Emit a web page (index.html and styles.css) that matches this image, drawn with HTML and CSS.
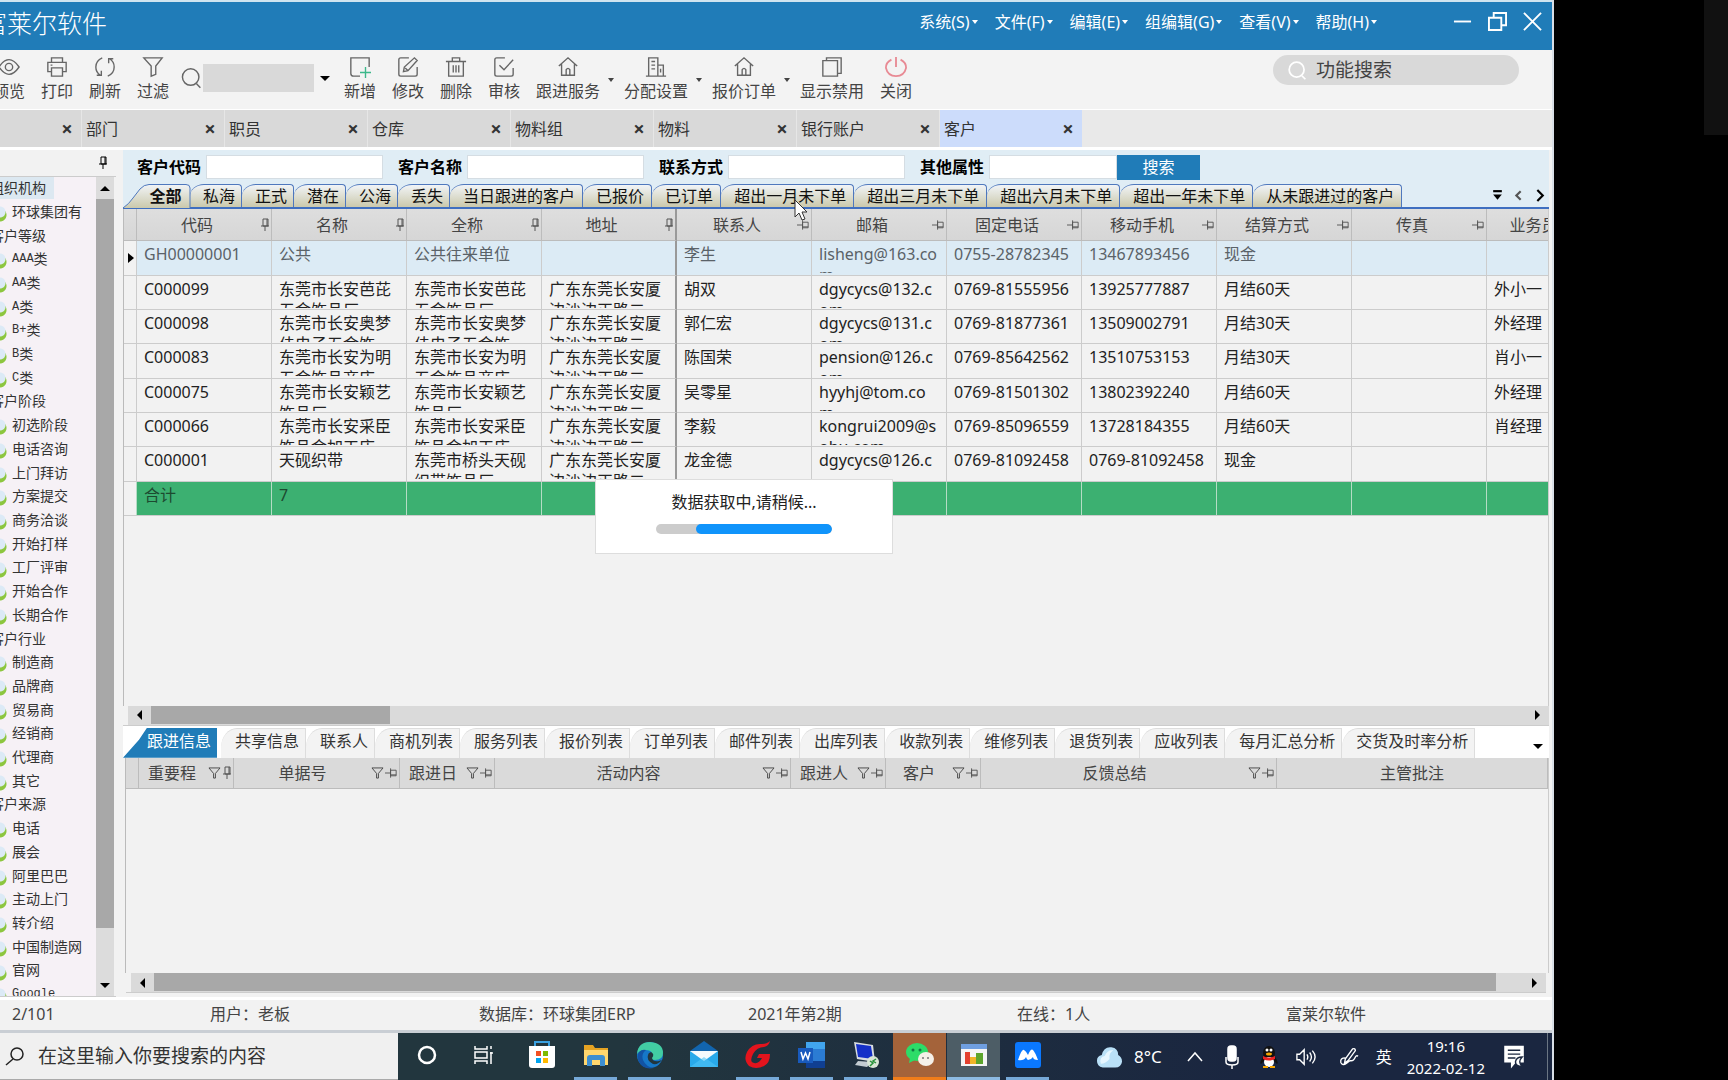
FILE: index.html
```html
<!DOCTYPE html>
<html lang="zh-CN">
<head>
<meta charset="utf-8">
<title>富莱尔软件</title>
<link rel="stylesheet" href="styles.css">
</head>
<body>
<svg class="defs" aria-hidden="true">
  <symbol id="pin" viewBox="0 0 10 14"><path d="M3 1h5v7H3zM1 8h8M5 8v5M7 1v7" /></symbol>
  <symbol id="pin-side" viewBox="0 0 14 10"><path d="M6 2h6v6H6zM6 0v10M0 5h6M6 7h6" /></symbol>
  <symbol id="funnel" viewBox="0 0 14 13"><path d="M1 1h12L8 7v5H6V7z" /></symbol>
  <symbol id="home" viewBox="0 0 24 24"><path d="M2 11 12 2l10 9M5 9v12h14V9M10 21v-6q2-3 4 0v6" /></symbol>
  <symbol id="lens" viewBox="0 0 24 24"><circle cx="11" cy="11" r="8.500"/><path d="m17 18 4 4" /></symbol>
</svg>
<div class="screen">
<div class="desktop">
  <header class="titlebar">
    <h1 class="brand">富莱尔软件</h1>
    <nav class="menu">
      <button>系统(S)<i class="caret"></i></button>
      <button>文件(F)<i class="caret"></i></button>
      <button>编辑(E)<i class="caret"></i></button>
      <button>组编辑(G)<i class="caret"></i></button>
      <button>查看(V)<i class="caret"></i></button>
      <button>帮助(H)<i class="caret"></i></button>
    </nav>
    <div class="winctl">
      <button aria-label="最小化"><svg viewBox="0 0 20 20"><path d="M1 10h18"/></svg></button>
      <button aria-label="还原"><svg viewBox="0 0 20 20"><path d="M1 6h13v13H1zM6 6V1h13v13h-5"/></svg></button>
      <button aria-label="关闭窗口"><svg viewBox="0 0 20 20"><path d="m1 1 18 18M19 1 1 19"/></svg></button>
    </div>
  </header>

  <div class="toolbar">
    <button class="tool"><svg viewBox="0 0 24 24"><path d="M1 12q11-16 22 0-11 16-22 0z"/><circle cx="12" cy="12" r="4"/></svg>预览</button>
    <button class="tool"><svg viewBox="0 0 24 24"><path d="M6 7V2h12v5M6 17H2V7h20v10h-4M6 13h12v9H6zM5 10h2"/></svg>打印</button>
    <button class="tool"><svg viewBox="0 0 24 24"><path d="M9 2Q2 5 2 12q0 6 5 9M3 21h5v-5M15 22q7-3 7-10 0-6-5-9M21 3h-5v5"/></svg>刷新</button>
    <button class="tool"><svg viewBox="0 0 24 24"><path d="M2 2h20l-7 9v9l-5 2V11z"/></svg>过滤</button>
    <label class="lookup"><svg viewBox="0 0 24 24"><use href="#lens"/></svg>
      <select aria-label="查找字段"><option></option></select><i class="caret big"></i></label>
    <button class="tool"><svg viewBox="0 0 24 24"><path d="M12 22H5q-3 0-3-3V2h20v10"/><path class="green" d="M18 12v12M12 18h12"/></svg>新增</button>
    <button class="tool"><svg viewBox="0 0 24 24"><path d="M13 2H4Q2 2 2 4v16q0 2 2 2h16q2 0 2-2v-8M7 17l1-5L19 2l3 3-10 11zM9 13l3 3"/></svg>修改</button>
    <button class="tool"><svg viewBox="0 0 24 24"><path d="M1 6h22M8 6V2h8v4M4 6v16h16V6M9 10v8M12 10v8M15 10v8"/></svg>删除</button>
    <button class="tool"><svg viewBox="0 0 24 24"><path d="M13 2H4Q2 2 2 4v16q0 2 2 2h16q2 0 2-2v-7M7 10l5 5L22 4"/></svg>审核</button>
    <button class="tool wide"><svg viewBox="0 0 24 24"><use href="#home"/></svg>跟进服务</button><button class="drop" aria-label="跟进服务选项"><i class="caret"></i></button>
    <button class="tool wide"><svg viewBox="0 0 24 24"><path d="M1 22h22M4 22V2h10v20M14 10h6v12M7 6h4M7 10h4M7 14h4M17 14v4"/></svg>分配设置</button><button class="drop" aria-label="分配设置选项"><i class="caret"></i></button>
    <button class="tool wide"><svg viewBox="0 0 24 24"><use href="#home"/></svg>报价订单</button><button class="drop" aria-label="报价订单选项"><i class="caret"></i></button>
    <button class="tool wide"><svg viewBox="0 0 24 24"><path d="M2 5h16v17H2zM6 5V2h16v17h-4"/></svg>显示禁用</button>
    <button class="tool"><svg class="red" viewBox="0 0 24 24"><path d="M7 4Q1 7 1 13q2 9 11 9t11-9q0-6-6-9M12 1v11"/></svg>关闭</button>
    <label class="fnsearch"><svg viewBox="0 0 24 24"><use href="#lens"/></svg><input type="text" value="功能搜索" aria-label="功能搜索"></label>
  </div>

  <div class="doctabs">
    <div class="doctab"><span></span><button aria-label="关闭">×</button></div>
    <div class="doctab"><span>部门</span><button aria-label="关闭">×</button></div>
    <div class="doctab"><span>职员</span><button aria-label="关闭">×</button></div>
    <div class="doctab"><span>仓库</span><button aria-label="关闭">×</button></div>
    <div class="doctab"><span>物料组</span><button aria-label="关闭">×</button></div>
    <div class="doctab"><span>物料</span><button aria-label="关闭">×</button></div>
    <div class="doctab"><span>银行账户</span><button aria-label="关闭">×</button></div>
    <div class="doctab active"><span>客户</span><button aria-label="关闭">×</button></div>
  </div>

  <div class="work">
    <aside class="side">
      <div class="sidehead"><button aria-label="固定"><svg class="pin dark"><use href="#pin"/></svg></button></div>
      <div class="sidebody">
        <ul class="tree">
          <li class="root sel"><span>组织机构</span></li>
          <li>环球集团有</li>
          <li class="root">客户等级</li>
          <li><b>AAA</b>类</li>
          <li><b>AA</b>类</li>
          <li><b>A</b>类</li>
          <li><b>B+</b>类</li>
          <li><b>B</b>类</li>
          <li><b>C</b>类</li>
          <li class="root">客户阶段</li>
          <li>初选阶段</li>
          <li>电话咨询</li>
          <li>上门拜访</li>
          <li>方案提交</li>
          <li>商务洽谈</li>
          <li>开始打样</li>
          <li>工厂评审</li>
          <li>开始合作</li>
          <li>长期合作</li>
          <li class="root">客户行业</li>
          <li>制造商</li>
          <li>品牌商</li>
          <li>贸易商</li>
          <li>经销商</li>
          <li>代理商</li>
          <li>其它</li>
          <li class="root">客户来源</li>
          <li>电话</li>
          <li>展会</li>
          <li>阿里巴巴</li>
          <li>主动上门</li>
          <li>转介绍</li>
          <li>中国制造网</li>
          <li>官网</li>
          <li><b>Google</b></li>
        </ul>
        <div class="vscroll">
          <button aria-label="向上"><i class="tri up"></i></button>
          <div class="vtrack"><div class="vthumb"></div></div>
          <button aria-label="向下"><i class="tri down"></i></button>
        </div>
      </div>
    </aside>

    <main class="main">
      <section class="upper">
        <form class="filter">
          <label for="f1">客户代码</label><input id="f1" type="text">
          <label for="f2">客户名称</label><input id="f2" type="text">
          <label for="f3">联系方式</label><input id="f3" type="text">
          <label for="f4">其他属性</label><input id="f4" class="short" type="text">
          <button type="button">搜索</button>
        </form>
        <div class="views">
          <button class="view first"><svg viewBox="0 0 68 24"><defs><linearGradient id="tabfill" x2="0" y2="1"><stop offset="0" stop-color="#f1f4f7"/><stop offset="1" stop-color="#cbc9ac"/></linearGradient></defs><path d="M0 24 Q6 20 10 14 L17 5 Q21 .5 26 .5 H63 Q67 .5 67 4 V24" fill="url(#tabfill)" stroke="#4f78bd"/></svg><span>全部</span></button>
          <button class="view brief">私海</button>
          <button class="view brief">正式</button>
          <button class="view brief">潜在</button>
          <button class="view brief">公海</button>
          <button class="view brief">丢失</button>
          <button class="view">当日跟进的客户</button>
          <button class="view">已报价</button>
          <button class="view">已订单</button>
          <button class="view">超出一月未下单</button>
          <button class="view">超出三月未下单</button>
          <button class="view">超出六月未下单</button>
          <button class="view">超出一年未下单</button>
          <button class="view">从未跟进过的客户</button>
          <div class="viewnav">
            <button aria-label="列表"><svg viewBox="0 0 10 12"><path d="M1 2h8" stroke="#000" stroke-width="2"/><path d="M1 5h8L5 10z" fill="#000"/></svg></button>
            <button aria-label="向前"><svg viewBox="0 0 10 12"><path d="M7 2 3 6l4 4" fill="none" stroke="#555" stroke-width="2"/></svg></button>
            <button aria-label="向后"><svg viewBox="0 0 10 12"><path d="m3 1 5 5-5 5" fill="none" stroke="#000" stroke-width="2"/></svg></button>
          </div>
          <svg class="cursor" viewBox="0 0 14 22"><path d="M1 1v17l4-4 3 7 3-1-3-7h5z" fill="#fff" stroke="#333"/></svg>
        </div>
        <div class="gridwrap">
          <table class="grid">
            <colgroup><col class="c-mark"><col><col><col><col><col><col><col><col><col><col><col class="c-last"></colgroup>
            <thead><tr>
              <th></th>
              <th><div>代码<svg class="pin"><use href="#pin"/></svg></div></th>
              <th><div>名称<svg class="pin"><use href="#pin"/></svg></div></th>
              <th><div>全称<svg class="pin"><use href="#pin"/></svg></div></th>
              <th class="frozen"><div>地址<svg class="pin"><use href="#pin"/></svg></div></th>
              <th><div>联系人<svg class="pin side-pin"><use href="#pin-side"/></svg></div></th>
              <th><div>邮箱<svg class="pin side-pin"><use href="#pin-side"/></svg></div></th>
              <th><div>固定电话<svg class="pin side-pin"><use href="#pin-side"/></svg></div></th>
              <th><div>移动手机<svg class="pin side-pin"><use href="#pin-side"/></svg></div></th>
              <th><div>结算方式<svg class="pin side-pin"><use href="#pin-side"/></svg></div></th>
              <th><div>传真<svg class="pin side-pin"><use href="#pin-side"/></svg></div></th>
              <th><div>业务员</div></th>
            </tr></thead>
            <tbody>
              <tr class="current"><td class="mark"><i class="tri right"></i></td><td><div>GH00000001</div></td><td><div>公共</div></td><td><div>公共往来单位</div></td><td class="frozen"></td><td><div>李生</div></td><td><div>lisheng@163.co<br>m</div></td><td><div>0755-28782345</div></td><td><div>13467893456</div></td><td><div>现金</div></td><td></td><td></td></tr>
              <tr><td class="mark"></td><td><div>C000099</div></td><td><div>东莞市长安芭芘五金饰品厂</div></td><td><div>东莞市长安芭芘五金饰品厂</div></td><td class="frozen"><div>广东东莞长安厦边沙边正路二</div></td><td><div>胡双</div></td><td><div>dgycycs@132.c<br>om</div></td><td><div>0769-81555956</div></td><td><div>13925777887</div></td><td><div>月结60天</div></td><td></td><td><div>外小一</div></td></tr>
              <tr><td class="mark"></td><td><div>C000098</div></td><td><div>东莞市长安奥梦佳电子五金饰</div></td><td><div>东莞市长安奥梦佳电子五金饰</div></td><td class="frozen"><div>广东东莞长安厦边沙边正路二</div></td><td><div>郭仁宏</div></td><td><div>dgycycs@131.c<br>om</div></td><td><div>0769-81877361</div></td><td><div>13509002791</div></td><td><div>月结30天</div></td><td></td><td><div>外经理</div></td></tr>
              <tr><td class="mark"></td><td><div>C000083</div></td><td><div>东莞市长安为明五金饰品商店</div></td><td><div>东莞市长安为明五金饰品商店</div></td><td class="frozen"><div>广东东莞长安厦边沙边正路二</div></td><td><div>陈国荣</div></td><td><div>pension@126.c<br>om</div></td><td><div>0769-85642562</div></td><td><div>13510753153</div></td><td><div>月结30天</div></td><td></td><td><div>肖小一</div></td></tr>
              <tr><td class="mark"></td><td><div>C000075</div></td><td><div>东莞市长安颖艺饰品厂</div></td><td><div>东莞市长安颖艺饰品厂</div></td><td class="frozen"><div>广东东莞长安厦边沙边正路二</div></td><td><div>吴零星</div></td><td><div>hyyhj@tom.co<br>m</div></td><td><div>0769-81501302</div></td><td><div>13802392240</div></td><td><div>月结60天</div></td><td></td><td><div>外经理</div></td></tr>
              <tr><td class="mark"></td><td><div>C000066</div></td><td><div>东莞市长安采臣饰品金加工店</div></td><td><div>东莞市长安采臣饰品金加工店</div></td><td class="frozen"><div>广东东莞长安厦边沙边正路二</div></td><td><div>李毅</div></td><td><div>kongrui2009@s<br>ohu.com</div></td><td><div>0769-85096559</div></td><td><div>13728184355</div></td><td><div>月结60天</div></td><td></td><td><div>肖经理</div></td></tr>
              <tr><td class="mark"></td><td><div>C000001</div></td><td><div>天砚织带</div></td><td><div>东莞市桥头天砚织带饰品厂</div></td><td class="frozen"><div>广东东莞长安厦边沙边正路二</div></td><td><div>龙金德</div></td><td><div>dgycycs@126.c</div></td><td><div>0769-81092458</div></td><td><div>0769-81092458</div></td><td><div>现金</div></td><td></td><td></td></tr>
              <tr class="total"><td class="mark"></td><td><div>合计</div></td><td><div>7</div></td><td></td><td></td><td></td><td></td><td></td><td></td><td></td><td></td><td></td></tr>
            </tbody>
          </table>
          <div class="loading" role="status">
            <p>数据获取中,请稍候...</p>
            <div class="bar"><div class="fill"></div></div>
          </div>
        </div>
        <div class="hscroll">
          <button aria-label="向左"><i class="tri left"></i></button>
          <div class="htrack"><div class="hthumb" style="width:17.4%"></div></div>
          <button aria-label="向右"><i class="tri right"></i></button>
        </div>
      </section>

      <section class="lower">
        <div class="subtabs">
          <button class="active">跟进信息</button>
          <button>共享信息</button>
          <button>联系人</button>
          <button>商机列表</button>
          <button>服务列表</button>
          <button>报价列表</button>
          <button>订单列表</button>
          <button>邮件列表</button>
          <button>出库列表</button>
          <button>收款列表</button>
          <button>维修列表</button>
          <button>退货列表</button>
          <button>应收列表</button>
          <button>每月汇总分析</button>
          <button>交货及时率分析</button>
          <button class="more" aria-label="更多"><i class="tri down"></i></button>
        </div>
        <div class="detailwrap">
          <table class="detail">
            <colgroup><col class="d-mark"><col class="d-s"><col class="d-m"><col class="d-s"><col class="d-l"><col class="d-s"><col class="d-s"><col class="d-l"><col></colgroup>
            <thead><tr>
              <th></th>
              <th><div>重要程<span><svg class="funnel"><use href="#funnel"/></svg><svg class="pin"><use href="#pin"/></svg></span></div></th>
              <th><div>单据号<span><svg class="funnel"><use href="#funnel"/></svg><svg class="pin side-pin"><use href="#pin-side"/></svg></span></div></th>
              <th><div>跟进日<span><svg class="funnel"><use href="#funnel"/></svg><svg class="pin side-pin"><use href="#pin-side"/></svg></span></div></th>
              <th><div>活动内容<span><svg class="funnel"><use href="#funnel"/></svg><svg class="pin side-pin"><use href="#pin-side"/></svg></span></div></th>
              <th><div>跟进人<span><svg class="funnel"><use href="#funnel"/></svg><svg class="pin side-pin"><use href="#pin-side"/></svg></span></div></th>
              <th><div>客户<span><svg class="funnel"><use href="#funnel"/></svg><svg class="pin side-pin"><use href="#pin-side"/></svg></span></div></th>
              <th><div>反馈总结<span><svg class="funnel"><use href="#funnel"/></svg><svg class="pin side-pin"><use href="#pin-side"/></svg></span></div></th>
              <th class="plain"><div>主管批注</div></th>
            </tr></thead>
          </table>
        </div>
        <div class="hscroll low">
          <button aria-label="向左"><i class="tri left"></i></button>
          <div class="htrack"><div class="hthumb" style="width:98%"></div></div>
          <button aria-label="向右"><i class="tri right"></i></button>
        </div>
      </section>
    </main>
  </div>

  <footer class="status">
    <span>2/101</span><span>用户：老板</span><span>数据库：环球集团ERP</span><span>2021年第2期</span><span>在线：1人</span><span>富莱尔软件</span>
  </footer>

  <div class="taskbar">
    <label class="winsearch"><svg viewBox="0 0 20 20"><circle cx="12" cy="8" r="6"/><path d="m8 13-7 6"/></svg><input type="text" value="在这里输入你要搜索的内容" aria-label="搜索"></label>
    <div class="apps">
      <button aria-label="Cortana"><svg viewBox="0 0 28 28"><circle cx="14" cy="14" r="8" fill="none" stroke="#fff" stroke-width="2.500"/></svg></button>
      <button class="taskview" aria-label="任务视图"><svg viewBox="0 0 28 28"><path d="M5 5v3h12V5M5 23v-3h12v3M5 11h12v6H5zM21 5v3M21 11v12M20 12h3" fill="none" stroke="#fff" stroke-width="1.500"/></svg></button>
      <button aria-label="Store"><svg viewBox="0 0 28 28"><path d="M7 6V1h14v5" fill="none" stroke="#3aa0e0" stroke-width="2"/><path d="M1 5h26v19q0 3-3 3H4q-3 0-3-3z" fill="#fff"/><path d="M8 10h5v5H8z" fill="#f25022"/><path d="M15 10h5v5h-5z" fill="#7fba00"/><path d="M8 17h5v5H8z" fill="#00a4ef"/><path d="M15 17h5v5h-5z" fill="#ffb900"/></svg></button>
      <button class="run" aria-label="文件资源管理器"><svg viewBox="0 0 28 28"><path d="M2 4h9l2 3h13v5H2z" fill="#e5a323"/><path d="M2 9h24v15H2z" fill="#ffd76e"/><path d="M5 25v-8q0-3 3-3h12q3 0 3 3v8h-5v-6h-8v6z" fill="#3d8fd1"/></svg></button>
      <button class="run" aria-label="Edge"><svg viewBox="0 0 28 28"><circle cx="14" cy="14" r="13" fill="#1677c8"/><path d="M1 13Q2 1 14 1q13 1 13 11 0 7-8 7-5 0-3-4 1-6-6-6-6 0-9 4z" fill="#42cda3"/><path d="M10 9q-5 4-3 10 3 7 11 8-11 2-15-6Q0 15 3 11q3-3 7-2z" fill="#1253a4"/><path d="M15 11q4 2 1 6 1 4 7 3l3-1q-4 5-9 4-7-4-5-9 0-2 3-3z" fill="#22363e"/></svg></button>
      <button aria-label="邮件"><svg viewBox="0 0 28 28"><path d="M0 10 14 0l14 10v4H0z" fill="#1265ae"/><path d="M0 10h28v16H0z" fill="#29a9ea"/><path d="M0 10h28L14 20z" fill="#f5fafd"/><path d="m0 26 14-10 14 10z" fill="#50c4f5" opacity=".6"/></svg></button>
      <button class="run" aria-label="G"><svg viewBox="0 0 28 28"><path d="M26 0q-1 5-6 6-7 0-11 7-4 8 1 9 5 1 8-5h-5l2-4h11q0 9-6 12-8 4-15 0-6-6-2-14Q8 2 18 3q5 0 8-3z" fill="#e3141d"/></svg></button>
      <button class="run" aria-label="Word"><svg viewBox="0 0 28 28"><path d="M8 1h19v26H8z" fill="#2b7cd3"/><path d="M8 1h19v7H8z" fill="#41a5ee"/><path d="M8 20h19v7H8z" fill="#103f91"/><path d="M0 7h15v15H0z" fill="#185abd"/><path d="m3 11 2 7 2.500-6L10 18l2-7" fill="none" stroke="#fff" stroke-width="1.500"/></svg></button>
      <button class="run" aria-label="远程"><svg viewBox="0 0 28 28"><path d="m2 1 19 3 2 17L5 18z" fill="#d8dde2"/><path d="m4 3 15 2 2 13L6 16z" fill="#1430c8"/><path d="m6 20 14 1-5 5-12-2z" fill="#c4ccd2"/><circle cx="21" cy="21" r="6" fill="#d9e6d6"/><path d="m18 20 3 2-3 3M24 18l-3 2 3 2" fill="none" stroke="#27913a" stroke-width="1.500"/></svg></button>
      <button class="run chat" aria-label="微信"><svg viewBox="0 0 28 28"><ellipse cx="11" cy="11" rx="11" ry="9" fill="#2ddc68"/><path d="m4 17-1 5 6-3z" fill="#2ddc68"/><ellipse cx="20" cy="18" rx="8" ry="7" fill="#f5f0e8"/><circle cx="7" cy="9" r="1.500" fill="#174"/><circle cx="14" cy="9" r="1.500" fill="#174"/><circle cx="17" cy="17" r="1" fill="#777"/><circle cx="22" cy="17" r="1" fill="#777"/></svg></button>
      <button class="run now" aria-label="ERP"><svg viewBox="0 0 28 28"><path d="M1 3h26v22H1z" fill="#f5f5f5"/><path d="M1 3h26v5H1z" fill="#6f9fe0"/><path d="M5 11h5v12H5z" fill="#e4412f"/><path d="M10 16h6v7h-6z" fill="#f0b429"/><path d="M16 12h7v11h-7z" fill="#5da52c"/></svg></button>
      <button class="run" aria-label="会议"><svg viewBox="0 0 28 28"><rect x="1" y="1" width="26" height="26" rx="3" fill="#0a78ff"/><path d="M4 19q4-12 6-10 2 1 4 5 3-7 5-5 2 2 5 10-5 0-5-3-2 3-5 3-1 0-2-3-2 4-8 3z" fill="#fff"/></svg></button>
    </div>
    <div class="tray">
      <svg class="cloud" viewBox="0 0 28 26"><path d="M7 24q-6-1-6-7 0-5 5-6 2-9 10-8 7 1 7 8 4 2 4 7-1 6-7 6z" fill="#b9e0f7"/><path d="M5 20q-2-7 4-8 3-7 9-6-5 3-4 9-4 5-9 5z" fill="#e6f6ff"/></svg>
      <span class="temp">8°C</span>
      <svg viewBox="0 0 20 20"><path d="m3 14 7-8 7 8"/></svg>
      <svg viewBox="0 0 20 24"><rect x="6" y="1" width="8" height="15" rx="3" fill="#fff"/><path d="M4 12v5q0 3 6 3t6-3v-5M10 20v4"/></svg>
      <svg viewBox="0 0 20 24"><path d="M4 12q-4 6-2 7l3-3h10l3 3q2-1-2-7z" fill="#111" stroke="none"/><ellipse cx="10" cy="8" rx="6" ry="7" fill="#111" stroke="none"/><ellipse cx="10" cy="17" rx="5" ry="5" fill="#fff" stroke="none"/><path d="M4 11q6 3 12 0v3q-6 3-12 0z" fill="#e22" stroke="none"/><ellipse cx="10" cy="9" rx="3" ry="1.500" fill="#f7a600" stroke="none"/><circle cx="8" cy="5" r="1.500" fill="#fff" stroke="none"/><circle cx="12" cy="5" r="1.500" fill="#fff" stroke="none"/><path d="M4 21h5v2H4zM11 21h5v2h-5z" fill="#f7a600" stroke="none"/></svg>
      <svg class="speaker" viewBox="0 0 22 20"><path d="M1 7h3l5-5v16l-5-5H1zM12 7q2 3 0 6M15 5q4 5 0 10M18 3q6 7 0 14"/></svg>
      <svg viewBox="0 0 22 22"><path d="m7 13 8-11q3-1 3 2l-8 11-4 3zM7 12q-6 0-5 5 2 4 6 1l4-3q4 1 6-4 1-2 3-1"/></svg>
      <span class="ime">英</span>
      <time class="clock">19:16<br>2022-02-12</time>
      <svg class="notice" viewBox="0 0 22 24"><path d="M1 1h19v16h-8l-4 5v-5H1z" fill="#fff"/><path d="M4 5h13M4 9h13M4 13h8" stroke="#1c2840"/><path d="M19 12q-5 5 0 10-7 0-7-5 1-5 7-5z" fill="#fff" stroke="#1c2840"/></svg>
    </div>
  </div>
</div>
<div class="beyond"><div class="patch"></div></div>
</div>
</body>
</html>
```

FILE: styles.css
```css
* { box-sizing: border-box; }
body {
  margin: 0;
  background: #000;
  color: #333;
  font: 16px/20px "Noto Sans", "Noto Sans CJK SC", sans-serif;
}
button, input, select { font: inherit; color: inherit; border: 0; padding: 0; background: none; border-radius: 0; outline: none; }
svg { display: block; }
.defs { position: absolute; width: 0; height: 0; }
ul, p, h1 { margin: 0; padding: 0; list-style: none; }

.screen { display: flex; min-height: 100vh; overflow: hidden; }
.desktop {
  flex: 1; min-width: 0; height: 100vh;
  display: flex; flex-direction: column;
  background: #f2f2f2; border-right: 2px solid #d9dfe6;
}
.beyond { width: 174px; display: flex; justify-content: flex-end; }
.patch { width: 24px; height: 135px; background: #111; }

.caret { width: 0; height: 0; border: 3px solid transparent; border-top: 4px solid currentColor; border-bottom: 0; }
.caret.big { border-width: 5px 5px 0; color: #000; }
.tri { display: block; width: 0; height: 0; border: 5px solid transparent; }
.tri.up { border-top: 0; border-bottom-color: #000; }
.tri.down { border-bottom: 0; border-top-color: #000; }
.tri.left { border-left: 0; border-right-color: #000; }
.tri.right { border-right: 0; border-left-color: #000; }

/* title bar */
.titlebar {
  height: 50px; flex: none; display: flex; align-items: flex-start;
  background: #207cb8; color: #fff; border-top: 2px solid #cfe4f0;
}
.brand { margin: 5px auto 0 -18px; font-size: 25px; line-height: 32px; font-weight: 300; white-space: nowrap; }
.menu { display: flex; gap: 17px; margin-top: 10px; }
.menu button { display: flex; align-items: center; gap: 2px; white-space: nowrap; }
.winctl { display: flex; gap: 16px; margin: 10px 10px 0 76px; }
.winctl svg { width: 19px; height: 19px; fill: none; stroke: #fff; stroke-width: 2; }

/* toolbar */
.toolbar {
  height: 59px; flex: none; display: flex; align-items: flex-start;
  padding: 6px 33px 0 0; background: #f3f3f3; color: #444;
}
.tool { width: 48px; display: flex; flex-direction: column; align-items: center; gap: 1px; line-height: 24px; white-space: nowrap; flex: none; }
.tool:first-child { margin-left: -15px; }
.tool.wide { width: 80px; }
.tool svg { width: 22px; height: 22px; fill: none; stroke: #666; stroke-width: 1.500; }
.tool .green { stroke: #3db88b; }
.tool svg.red { stroke: #e88a94; stroke-width: 2; }
.drop { width: 8px; height: 48px; display: flex; align-items: center; flex: none; }
.lookup { display: flex; align-items: center; width: 154px; margin: 8px 2px 0 3px; }
.lookup svg { width: 24px; height: 24px; fill: none; stroke: #666; stroke-width: 1.500; }
.lookup select { appearance: none; width: 114px; height: 28px; background: #d9d9d9; }
.lookup .caret { margin: 0 4px 0 6px; }
.fnsearch {
  width: 246px; height: 30px; margin: -1px 0 0 auto; display: flex; align-items: center; gap: 8px;
  padding-left: 14px; border-radius: 15px; background: #d9d9d9;
}
.fnsearch svg { width: 21px; height: 21px; fill: none; stroke: #fff; stroke-width: 2; }
.fnsearch input { width: 180px; font-size: 19px; line-height: 24px; }

/* document tabs */
.doctabs {
  height: 41px; flex: none; display: flex; background: #e9e9e9;
  border-top: 1px solid #fff; border-bottom: 3px solid #fff;
}
.doctab {
  width: 143px; flex: none; display: flex; align-items: center; justify-content: space-between;
  padding: 0 8px 0 4px; background: #d9d9d9; border-left: 1px solid #e6e6e6;
}
.doctab:first-child { margin-left: -62px; }
.doctab.active { background: #ccdcfb; }
.doctab button { width: 12px; font-size: 20px; font-weight: 700; }

/* work area */
.work { flex: 1; min-height: 0; display: flex; gap: 7px; }
.side { width: 116px; flex: none; display: flex; flex-direction: column; }
.sidehead { height: 27px; flex: none; display: flex; justify-content: flex-end; align-items: center; padding-right: 8px; border-bottom: 1px solid #ccc; }
.sidebody { flex: 1; min-height: 0; display: flex; overflow: hidden; border-bottom: 1px solid #ccc; }
.tree {
  width: 96px; flex: none; height: calc(100% + 11px); display: grid; grid-auto-rows: 1fr;
  background: #f6f1f6; font-size: 14px;
}
.tree li { display: flex; align-items: center; padding: 0 0 2px 12px; white-space: nowrap; background: radial-gradient(circle at 0 11px, #dceaf6 5px, transparent 6px), radial-gradient(circle at 0 14px, #8cc63f 6px, transparent 7px); }
.tree li.root { padding-left: 0; margin-left: -10px; background: none; }
.tree .sel span { padding-right: 8px; background: #dce8f1; line-height: 22px; }
.tree b { font: 12px/20px "Liberation Mono", monospace; }
.vscroll { width: 18px; display: flex; flex-direction: column; background: #dcdcdc; }
.vscroll button { height: 22px; display: grid; place-items: center; }
.vtrack { flex: 1; }
.vthumb { height: 94%; background: #a8a8a8; }

.pin { width: 10px; height: 14px; fill: none; stroke: #555; stroke-width: 1; }
.pin.dark { stroke: #000; }
.pin.side-pin { width: 13px; height: 10px; }
.funnel { width: 13px; height: 12px; fill: none; stroke: #444; }

.main { flex: 1; min-width: 0; display: grid; grid-template-rows: minmax(0, 575fr) minmax(0, 271fr); }
.upper, .lower { display: flex; flex-direction: column; min-width: 0; padding-right: 3px; }
.filter { height: 34px; flex: none; display: flex; align-items: center; padding-left: 14px; background: #e0edf5; }
.filter label { width: 69px; flex: none; font-weight: 700; color: #000; white-space: nowrap; }
.filter input { width: 177px; height: 24px; margin-right: 15px; background: #fff; border: 1px solid #d5dde3; }
.filter input.short { width: 128px; margin-right: 0; }
.filter button { width: 83px; height: 25px; background: #207cb8; color: #fff; }
.views { height: 25px; flex: none; display: flex; background: #e0edf5; border-bottom: 2px solid #3f6fc0; position: relative; }
.view {
  flex: none; height: 23px; padding: 0 7px 0 13px; color: #111; white-space: nowrap; line-height: 20px;
  background: linear-gradient(#f1f4f7, #cbc9ac);
  border-top: 1px solid #4f78bd; border-right: 1px solid #4f78bd; border-top-left-radius: 14px 12px; border-top-right-radius: 4px;
}
.view.brief { padding-right: 6px; }
.view.first { width: 67px; border: 0; background: none; padding: 0; font-weight: 700; position: relative; }
.view.first svg { position: absolute; inset: 0; width: 68px; height: 24px; }
.view.first span { position: relative; margin-left: 18px; }
.viewnav { margin-left: auto; display: flex; align-items: center; gap: 10px; padding-right: 4px; }
.viewnav svg { width: 11px; height: 13px; }
.cursor { position: absolute; left: 671px; top: 15px; width: 14px; height: 22px; z-index: 2; }

.gridwrap { flex: 1; min-height: 0; overflow: hidden; position: relative; border-left: 1px solid #bbb; border-right: 1px solid #ccc; }
table { border-collapse: separate; border-spacing: 0; table-layout: fixed; }
.grid { width: 1471px; }
.grid col { width: 135px; }
.grid .c-mark { width: 13px; }
.grid .c-last { width: 108px; }
th { padding: 0; font-weight: 400; color: #444; background: linear-gradient(#dedede, #d6d6d6); border-right: 1px solid #bcbcbc; border-bottom: 1px solid #bcbcbc; white-space: nowrap; }
.grid th { height: 32px; }
.grid th div { position: relative; padding-right: 14px; }
.grid th .pin { position: absolute; right: 1px; top: 3px; }
.grid th .side-pin { top: 5px; }
.grid td { height: 34px; padding: 0; vertical-align: top; border-right: 1px solid #ccc; border-bottom: 1px solid #ccc; color: #222; }
.grid tbody tr:nth-child(3n + 1) td { height: 35px; }
.grid td div { height: 32px; padding: 3px 6px 0 7px; line-height: 21px; overflow: hidden; }
.grid .current td { background: #dcebf5; color: #5a6268; }
.grid .current td.mark { background: #f2f2f2; vertical-align: middle; }
.grid .mark .tri { margin-left: 4px; border-left-width: 6px; }
.grid .frozen { border-right: 2px solid #999; }
.grid .total td { background: #3cb071; border-right-color: #b5dcc5; color: #1c4a30; }
.grid .total td.mark { background: #f2f2f2; }

.loading {
  position: absolute; left: calc(50% - 241px); top: 270px; width: 298px; height: 75px;
  background: #fff; border: 1px solid #ddd; padding-top: 12px; text-align: center; color: #222;
}
.bar { width: 176px; height: 10px; margin: 12px auto 0; border-radius: 5px; background: #ccc; display: flex; justify-content: flex-end; overflow: hidden; }
.fill { width: 136px; border-radius: 5px; background: #1094fb; }

.hscroll { height: 20px; flex: none; display: flex; padding-left: 5px; background: linear-gradient(90deg, #f2f2f2 5px, #dadada 5px); border-bottom: 1px solid #ccc; }
.hscroll button { width: 23px; display: grid; place-items: center; }
.htrack { flex: 1; }
.hthumb { height: 18px; background: #a8a8a8; }

.subtabs { height: 32px; flex: none; display: flex; background: #fff; padding-top: 2px; }
.subtabs button {
  flex: none; padding: 0 6px 4px 14px; white-space: nowrap; background: #f3f3f3; color: #333;
  border-top: 1px solid #ddd; border-right: 1px solid #ddd; border-top-left-radius: 16px 20px; line-height: 24px;
}
.subtabs button.active {
  width: 94px; padding: 0 0 4px 18px; margin-right: 4px; background: #207cb8; color: #fff; border: 0; border-radius: 0;
  clip-path: polygon(0 100%, 16px 12px, 24px 0, 100% 0, 100% 100%);
}
.subtabs button.more { margin-left: auto; border: 0; background: none; padding: 8px 6px 0; border-radius: 0; }
.detailwrap { flex: 1; min-height: 0; margin-left: 2px; border-left: 1px solid #bbb; border-right: 1px solid #ccc; }
.detail { width: 100%; }
.detail th { height: 31px; background: #dadada; }
.detail .d-mark { width: 13px; }
.detail .d-s { width: 95px; }
.detail .d-m { width: 166px; }
.detail .d-l { width: 296px; }
.detail th div { position: relative; padding-right: 28px; }
.detail th.plain div { padding-right: 0; }
.detail th span { position: absolute; right: 1px; top: 0; height: 20px; display: flex; align-items: center; gap: 1px; }
.low { margin: 0 3px 4px; }

/* status line */
.status {
  height: 36px; flex: none; display: grid; grid-template-columns: 198px repeat(4, 269px) 1fr; align-items: center;
  padding: 0 0 2px 12px; border-top: 3px solid #fff; border-bottom: 3px solid #c9ced4; color: #444; white-space: nowrap;
}

/* system taskbar */
.taskbar { height: 47px; flex: none; display: flex; background: linear-gradient(90deg, #22363e 40%, #1a2640 80%); color: #fff; }
.winsearch { width: 398px; flex: none; display: flex; align-items: center; gap: 13px; padding-left: 5px; background: #f0f0f0; color: #333; border-bottom: 1px solid #aaa; }
.winsearch svg { width: 20px; height: 20px; fill: none; stroke: #222; stroke-width: 1.500; }
.winsearch input { width: 300px; font-size: 19px; line-height: 26px; }
.apps { display: flex; padding-left: 2px; gap: 1px; }
.apps button { width: 53px; display: grid; place-items: center; border-bottom: 3px solid transparent; }
.apps .taskview { width: 60px; }
.apps svg { width: 28px; height: 28px; }
.apps .run { background: linear-gradient(90deg, transparent 5px, #76a9d8 5px, #76a9d8 48px, transparent 48px) bottom / 100% 3px no-repeat border-box; }
.apps .chat { background: #a4633a; border-bottom-color: #f07d1a; }
.apps .now { background: #4d5d66; border-bottom-color: #8dbbe3; }
.tray { margin-left: auto; display: flex; align-items: center; padding-right: 4px; border-right: 1px solid #6b7684; margin-right: 4px; }
.tray svg { width: 20px; height: 24px; margin-right: 17px; fill: none; stroke: #fff; stroke-width: 1.500; }
.tray svg.cloud { width: 27px; height: 26px; margin-right: 11px; stroke: none; }
.tray svg.speaker { margin-right: 23px; }
.temp { margin-right: 23px; font-size: 17px; }
.ime { margin-right: 15px; }
.clock { font-size: 15px; line-height: 22px; text-align: center; }
.tray svg.notice { width: 21px; margin: 0 18px 0 19px; }
```
